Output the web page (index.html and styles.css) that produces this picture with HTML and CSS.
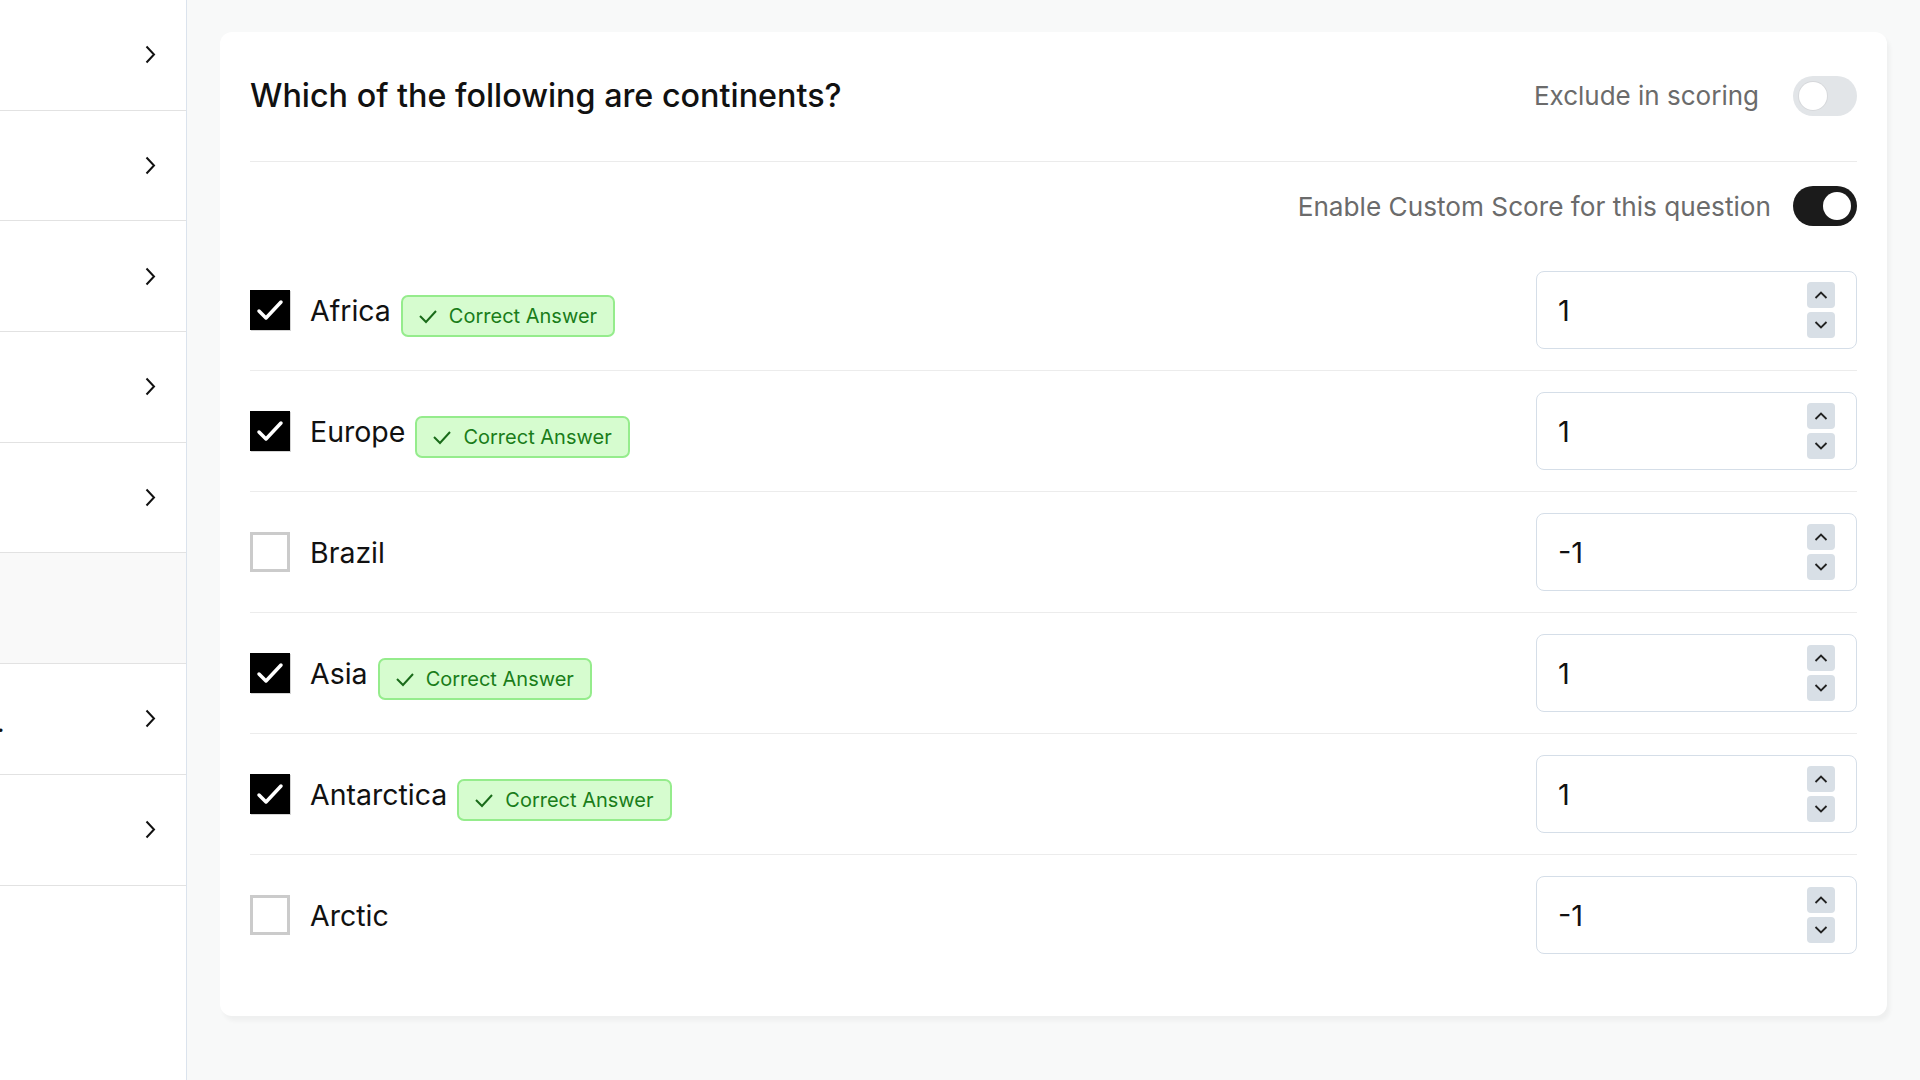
FILE: index.html
```html
<!DOCTYPE html>
<html>
<head>
  <title>Question Scoring</title>
  <link rel="stylesheet" href="styles.css">
</head>
<body>
  <aside class="sidebar">
    <div class="nav-row"><svg class="nav-chevron" viewBox="0 0 11 19"><path d="M1.5 1.5 L9 9.5 L1.5 17.5"/></svg></div>
    <div class="nav-row"><svg class="nav-chevron" viewBox="0 0 11 19"><path d="M1.5 1.5 L9 9.5 L1.5 17.5"/></svg></div>
    <div class="nav-row"><svg class="nav-chevron" viewBox="0 0 11 19"><path d="M1.5 1.5 L9 9.5 L1.5 17.5"/></svg></div>
    <div class="nav-row"><svg class="nav-chevron" viewBox="0 0 11 19"><path d="M1.5 1.5 L9 9.5 L1.5 17.5"/></svg></div>
    <div class="nav-row"><svg class="nav-chevron" viewBox="0 0 11 19"><path d="M1.5 1.5 L9 9.5 L1.5 17.5"/></svg></div>
    <div class="nav-row active"></div>
    <div class="nav-row"><span class="nav-cut">.</span><svg class="nav-chevron" viewBox="0 0 11 19"><path d="M1.5 1.5 L9 9.5 L1.5 17.5"/></svg></div>
    <div class="nav-row"><svg class="nav-chevron" viewBox="0 0 11 19"><path d="M1.5 1.5 L9 9.5 L1.5 17.5"/></svg></div>
  </aside>

  <main class="content">
    <section class="question-card">
      <div class="q-head">
        <h2>Which of the following are continents?</h2>
        <label class="exclude">
          <span>Exclude in scoring</span>
          <span class="toggle"><span class="knob"></span></span>
        </label>
      </div>

      <div class="custom-row">
        <span>Enable Custom Score for this question</span>
        <span class="toggle on"><span class="knob"></span></span>
      </div>

      <div class="option">
        <span class="box checked"><svg viewBox="0 0 40 40"><path d="M9 21 L16 28 L31 12"/></svg></span>
        <span class="answer">Africa</span>
        <span class="badge"><svg viewBox="0 0 20 16"><path d="M2 8 L8 14 L18 3"/></svg>Correct Answer</span>
        <div class="score-field">
          <input class="score-input" type="text" value="1">
          <div class="stepper">
            <span class="step"><svg viewBox="0 0 14 8"><path d="M1.5 7 L7 1.5 L12.5 7"/></svg></span>
            <span class="step"><svg viewBox="0 0 14 8"><path d="M1.5 1 L7 6.5 L12.5 1"/></svg></span>
          </div>
        </div>
      </div>

      <div class="option">
        <span class="box checked"><svg viewBox="0 0 40 40"><path d="M9 21 L16 28 L31 12"/></svg></span>
        <span class="answer">Europe</span>
        <span class="badge"><svg viewBox="0 0 20 16"><path d="M2 8 L8 14 L18 3"/></svg>Correct Answer</span>
        <div class="score-field">
          <input class="score-input" type="text" value="1">
          <div class="stepper">
            <span class="step"><svg viewBox="0 0 14 8"><path d="M1.5 7 L7 1.5 L12.5 7"/></svg></span>
            <span class="step"><svg viewBox="0 0 14 8"><path d="M1.5 1 L7 6.5 L12.5 1"/></svg></span>
          </div>
        </div>
      </div>

      <div class="option">
        <span class="box"></span>
        <span class="answer">Brazil</span>
        <div class="score-field">
          <input class="score-input" type="text" value="-1">
          <div class="stepper">
            <span class="step"><svg viewBox="0 0 14 8"><path d="M1.5 7 L7 1.5 L12.5 7"/></svg></span>
            <span class="step"><svg viewBox="0 0 14 8"><path d="M1.5 1 L7 6.5 L12.5 1"/></svg></span>
          </div>
        </div>
      </div>

      <div class="option">
        <span class="box checked"><svg viewBox="0 0 40 40"><path d="M9 21 L16 28 L31 12"/></svg></span>
        <span class="answer">Asia</span>
        <span class="badge"><svg viewBox="0 0 20 16"><path d="M2 8 L8 14 L18 3"/></svg>Correct Answer</span>
        <div class="score-field">
          <input class="score-input" type="text" value="1">
          <div class="stepper">
            <span class="step"><svg viewBox="0 0 14 8"><path d="M1.5 7 L7 1.5 L12.5 7"/></svg></span>
            <span class="step"><svg viewBox="0 0 14 8"><path d="M1.5 1 L7 6.5 L12.5 1"/></svg></span>
          </div>
        </div>
      </div>

      <div class="option">
        <span class="box checked"><svg viewBox="0 0 40 40"><path d="M9 21 L16 28 L31 12"/></svg></span>
        <span class="answer">Antarctica</span>
        <span class="badge"><svg viewBox="0 0 20 16"><path d="M2 8 L8 14 L18 3"/></svg>Correct Answer</span>
        <div class="score-field">
          <input class="score-input" type="text" value="1">
          <div class="stepper">
            <span class="step"><svg viewBox="0 0 14 8"><path d="M1.5 7 L7 1.5 L12.5 7"/></svg></span>
            <span class="step"><svg viewBox="0 0 14 8"><path d="M1.5 1 L7 6.5 L12.5 1"/></svg></span>
          </div>
        </div>
      </div>

      <div class="option">
        <span class="box"></span>
        <span class="answer">Arctic</span>
        <div class="score-field">
          <input class="score-input" type="text" value="-1">
          <div class="stepper">
            <span class="step"><svg viewBox="0 0 14 8"><path d="M1.5 7 L7 1.5 L12.5 7"/></svg></span>
            <span class="step"><svg viewBox="0 0 14 8"><path d="M1.5 1 L7 6.5 L12.5 1"/></svg></span>
          </div>
        </div>
      </div>
    </section>
  </main>
</body>
</html>
```

FILE: styles.css
```css
body {
  margin: 0;
  height: 100vh;
  display: flex;
  overflow: hidden;
  background-color: #f8f9f9;
  font-family: Inter, "Noto Sans", sans-serif;
  color: #111;
}

/* left navigation */
.sidebar {
  width: 186px;
  flex-shrink: 0;
  background-color: #fff;
  border-right: 1px solid #dbe3ed;
}

.nav-row {
  height: 110.7px;
  box-sizing: border-box;
  border-bottom: 1px solid #e2e2e2;
  display: flex;
  align-items: center;
  justify-content: flex-end;
  padding-right: 30px;
  position: relative;
}
.nav-row.active {
  background-color: #f9f9f9;
}

.nav-chevron {
  width: 11px;
  height: 19px;
  fill: none;
  stroke: #111;
  stroke-width: 2;
}

.nav-cut {
  position: absolute;
  left: -3px;
  top: 43px;
  font-size: 26px;
}

/* main area */
.content {
  flex: 1;
  padding: 32px 33px;
}

.question-card {
  background-color: #fff;
  border-radius: 12px;
  padding: 30px 30px 41px;
  box-shadow: 3px 5px 4px rgba(0, 0, 0, 0.04);
}

.q-head {
  height: 67px;
  padding-bottom: 32px;
  border-bottom: 1px solid #ebebeb;
  display: flex;
  align-items: center;
  justify-content: space-between;
}

.q-head h2 {
  margin: 0;
  font-size: 32.3px;
  font-weight: 500;
  color: #111;
}

.exclude {
  display: flex;
  align-items: center;
  gap: 34px;
  font-size: 26px;
  color: #6b6b6b;
}

.toggle {
  width: 64px;
  height: 40px;
  border-radius: 20px;
  background-color: #e2e5e8;
  box-sizing: border-box;
  padding: 6px;
  display: flex;
}
.toggle .knob {
  width: 28px;
  height: 28px;
  border-radius: 50%;
  background-color: #fff;
  box-shadow: 0 0 0 1px #d6d8db;
}
.toggle.on {
  background-color: #1b1b1b;
  justify-content: flex-end;
}
.toggle.on .knob {
  box-shadow: none;
}

.custom-row {
  height: 88px;
  display: flex;
  align-items: center;
  justify-content: flex-end;
  gap: 22px;
  font-size: 26.2px;
  color: #6b6b6b;
}

/* answer options */
.option {
  display: flex;
  align-items: center;
  padding: 21px 0;
  border-bottom: 1px solid #ececec;
}
.option:last-child {
  border-bottom: none;
}

.box {
  width: 40px;
  height: 40px;
  box-sizing: border-box;
  border: 3px solid #cbcbcb;
  flex-shrink: 0;
}
.box.checked {
  background-color: #000;
  border: none;
  box-shadow: 1px 1px 0 #d4d4d4;
}
.box svg {
  width: 40px;
  height: 40px;
  fill: none;
  stroke: #fff;
  stroke-width: 3.5;
  stroke-linecap: round;
  stroke-linejoin: round;
}

.answer {
  margin-left: 20px;
  font-size: 28.5px;
  color: #111;
}

.badge {
  margin-left: 10px;
  margin-top: 12px;
  height: 42px;
  box-sizing: border-box;
  padding: 0 16px 0 15px;
  display: inline-flex;
  align-items: center;
  gap: 11px;
  background-color: #d6fccf;
  border: 2px solid #95ec8c;
  border-radius: 7px;
  color: #1a7d1a;
  font-size: 20px;
}
.badge svg {
  width: 20px;
  height: 16px;
  fill: none;
  stroke: #1a6b1a;
  stroke-width: 2;
}

.score-field {
  margin-left: auto;
  width: 321px;
  height: 78px;
  box-sizing: border-box;
  border: 1px solid #d5dee8;
  border-radius: 8px;
  padding: 0 21px 0 21px;
  display: flex;
  align-items: center;
  justify-content: space-between;
}

.score-input {
  width: 200px;
  border: none;
  outline: none;
  padding: 0;
  font-family: inherit;
  font-size: 29px;
  color: #111;
  background: transparent;
}

.stepper {
  display: flex;
  flex-direction: column;
  gap: 4px;
}

.step {
  width: 28px;
  height: 26px;
  border-radius: 4px;
  background-color: #d8dfe6;
  display: flex;
  align-items: center;
  justify-content: center;
}
.step svg {
  width: 14px;
  height: 8px;
  fill: none;
  stroke: #222;
  stroke-width: 1.8;
}
```
